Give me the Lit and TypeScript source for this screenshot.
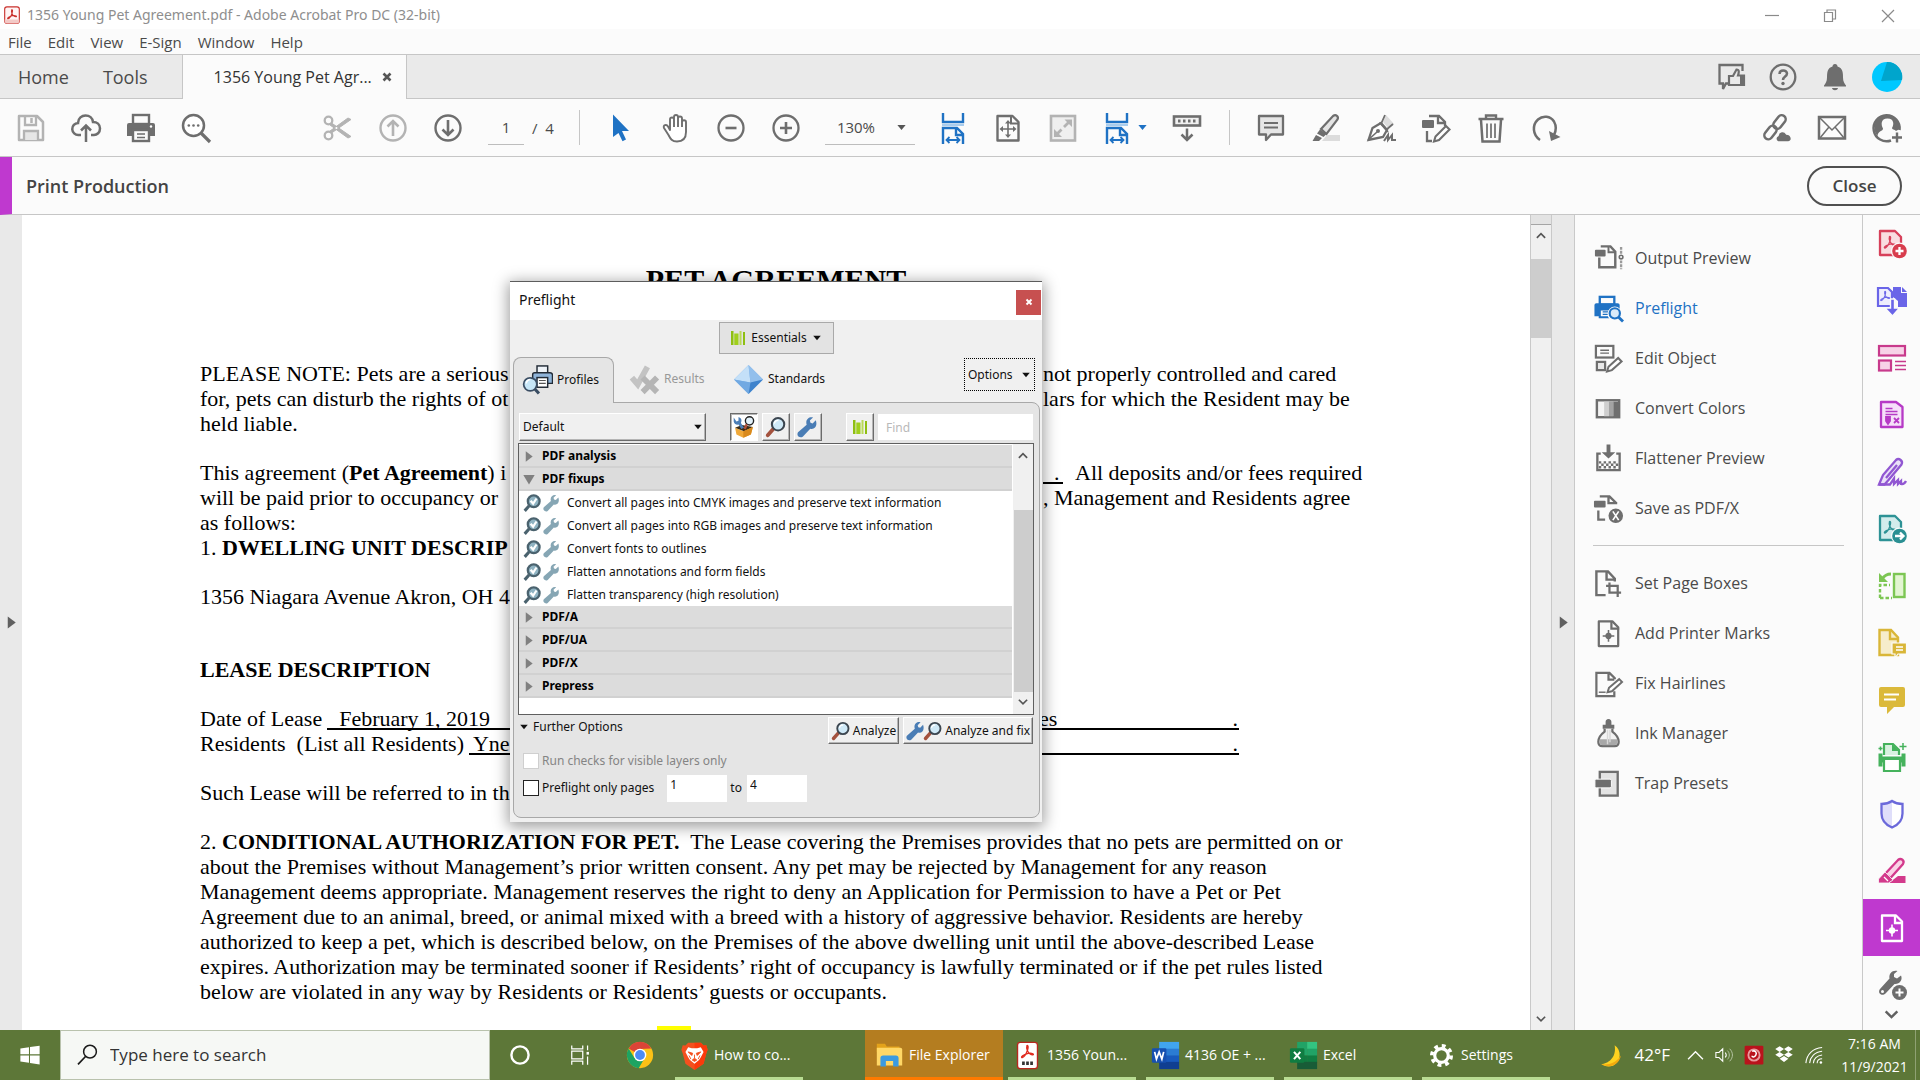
import { LitElement, html, svg, css, nothing } from "lit";
import { customElement, property, state } from "lit/decorators.js";
import { classMap } from "lit/directives/class-map.js";

const G = "#6e6e6e";
const L = "#b3b3b3";
const B = "#1f72c4";

const pdfMark = (c: string, x = 0, y = 0) =>
  svg`<path transform="translate(${x} ${y})" d="M6 0.5c1.6-.6 1.2 2.5.4 4.6C5.4 8 3.2 11.600 1.600 12c-1.500.2-.6-1.700 1.700-2.700 2.600-1.200 6.500-1.900 8.400-.9 1.500 1.200-1 1.500-2.700.2C7 7.200 5 3.500 6 .5z" fill="none" stroke=${c} stroke-width="1.300"/>`;

const wrenchBody = (c: string) =>
  svg`<path transform="translate(-2 -1) scale(1.150)" d="M25.500 6.200 21.500 10.200 18.800 9.400 18 6.700 22 2.700C18 1.400 13.500 4.200 13.500 9c0 1.200.2 2 .5 2.800L3 21.500c-2.500 4 2 8 6 5.500L18.500 17c5 1.600 9.700-3 7-10.800z" fill=${c}/>`;

const lens = (ring: string, handle: string, glass: string) => svg`
  <path d="M12 19 4 28" stroke=${handle} stroke-width="5.500" stroke-linecap="round"/>
  <circle cx="19" cy="12" r="9" fill=${glass} stroke=${ring} stroke-width="3"/>
  <path d="M13.500 11a5.500 5.500 0 0 1 6-4.500" stroke="#fff" stroke-width="2" fill="none"/>`;

const books = svg`
  <rect x="2" y="2" width="5" height="28" fill="#8fbf12"/><rect x="8.500" y="7" width="8.500" height="23" fill="#a0cf1c"/>
  <rect x="19" y="2" width="4" height="28" fill="#b9d957"/><rect x="26" y="4" width="4" height="26" fill="#8fbf12"/>`;

const printMarks = (c: string) => svg`
  <path d="M6 3.500h14l6 6V29H6z" fill="none" stroke=${c} stroke-width="2.300" stroke-linejoin="round"/>
  <path d="M19 3v8h8" fill="none" stroke=${c} stroke-width="2.300"/>
  <circle cx="16" cy="18.500" r="3.200" fill=${c}/><path d="M16 12.500v12M10 18.500h12" stroke=${c} stroke-width="1.600"/>`;

const fitWidth = svg`
  <path d="M6 1v9h20V1" fill="none" stroke=${B} stroke-width="2.400"/><path d="M5 13h22" stroke="#a9cdee" stroke-width="2"/>
  <path d="M6 32V16h14l6 6v10M19 16v7h7" fill="none" stroke=${B} stroke-width="2.400"/>
  <path d="M9.500 28h13M12.500 25l-3 3 3 3M19.500 25l3 3-3 3" fill="none" stroke=${B} stroke-width="1.800"/>`;

const ICONS: Record<string, unknown> = {
  acrobat: svg`<rect x="3" y="1.500" width="26" height="29" rx="4" fill="#fff4f4" stroke="#c9302c" stroke-width="2"/>
    <path d="M3 24h26v3a3.500 3.500 0 0 1-3.500 3.500h-19A3.500 3.500 0 0 1 3 27z" fill="#f3c9c6"/><g transform="translate(7 6) scale(1.400)">${pdfMark("#c9302c")}</g>`,
  minimize: svg`<path d="M9 15.500h14" stroke="#8a8a8a" stroke-width="1.200"/>`,
  restore: svg`<path d="M10.500 12.500h8v9h-8zM13 12.500v-2.500h8.500v9h-3" fill="none" stroke="#8a8a8a" stroke-width="1.200"/>`,
  closeWin: svg`<path d="M10 10l12 12M22 10 10 22" stroke="#8a8a8a" stroke-width="1.200"/>`,
  x: svg`<path d="M8 8l16 16M24 8 8 24" stroke="currentColor" stroke-width="6"/>`,
  feedback: svg`<path d="M14 22.500h-3l-3 5.500v-5.500H4.500V4h23v6" fill="none" stroke=${G} stroke-width="2.300"/>
    <path d="M14 15h4l3.500-6.500c3 0 2.500 3 1.500 6h6v9.500H14z" fill="#eaeaea" stroke=${G} stroke-width="2.200"/><rect x="25" y="14" width="5" height="11" fill=${G}/>`,
  help: svg`<circle cx="16" cy="16" r="12.300" fill="none" stroke=${G} stroke-width="2.300"/>
    <path d="M12.500 13c0-5 7.500-4.500 7.500-.5 0 3-4 3-4 6.500" fill="none" stroke=${G} stroke-width="2.500"/><circle cx="16" cy="22.500" r="1.700" fill=${G}/>`,
  bell: svg`<path d="M16 3c2 0 2.500 1.500 2.500 2.500 5 1.500 5.500 5.500 5.500 11 0 4 1.500 6 3 8v1H5v-1c1.500-2 3-4 3-8 0-5.500.5-9.500 5.500-11C13.500 4.500 14 3 16 3zM13 27h6c-.5 3-5.500 3-6 0z" fill=${G}/>`,
  avatar: svg`<circle cx="16" cy="16" r="15" fill="#00c8ff"/><path d="M16 1A15 15 0 0 1 31 19L10 20 16 1z" fill="#00a5cc"/>`,
  save: svg`<path d="M4 4h18l6 6v18H4z" fill="none" stroke=${L} stroke-width="2.500" stroke-linejoin="round"/><path d="M10 4v9h11V4" fill="none" stroke=${L} stroke-width="2.300"/>
    <path d="M16.500 6v5" stroke=${L} stroke-width="2.500"/><path d="M9 28v-9h14v9" fill="#e6e6e6" stroke=${L} stroke-width="2.300"/>`,
  cloudUp: svg`<path d="M11 23H8.500a6 6 0 0 1-.5-12C8 6 12 3.500 15.500 3.500c4 0 7 2.500 7.500 6.500 4 0 7 2.500 7 6.500s-3 6.500-6 6.500H21" fill="none" stroke=${G} stroke-width="2.500"/>
    <path d="M16 30V14M11 18.500l5-5 5 5" fill="none" stroke=${G} stroke-width="2.500"/>`,
  print: svg`<rect x="8" y="3" width="16" height="9" fill="none" stroke=${G} stroke-width="2.400"/><path d="M4 11h24a2 2 0 0 1 2 2v11h-6v-5H8v5H2V13a2 2 0 0 1 2-2z" fill=${G}/>
    <rect x="8" y="18" width="16" height="11" fill="#fbfbfb" stroke=${G} stroke-width="2.400"/><path d="M12 22h8M12 25.500h8" stroke=${G} stroke-width="1.500"/><circle cx="26" cy="14.500" r="1.200" fill="#fff"/>`,
  zoomOut: svg`<circle cx="13.500" cy="13.500" r="10.500" fill="#fff" stroke=${G} stroke-width="2.500"/><path d="M21 21l9 9" stroke=${G} stroke-width="3.200"/>
    <circle cx="8.800" cy="13.500" r="1.300" fill=${G}/><circle cx="13.500" cy="13.500" r="1.300" fill=${G}/><circle cx="18.200" cy="13.500" r="1.300" fill=${G}/>`,
  scissors: svg`<circle cx="6.500" cy="8.500" r="3.800" fill="none" stroke=${L} stroke-width="2.300"/><circle cx="6.500" cy="23.500" r="3.800" fill="none" stroke=${L} stroke-width="2.300"/>
    <path d="M9.500 11 29 24.500l-3 1.500L8 13zM9.500 21 29 7.500 26 6 8 19z" fill=${L} stroke=${L} stroke-width="1"/>`,
  up: svg`<circle cx="16" cy="16" r="12.500" fill="none" stroke=${L} stroke-width="2.400"/><path d="M16 24V9M10.500 14.500 16 9l5.500 5.500" fill="none" stroke=${L} stroke-width="2.600"/>`,
  down: svg`<circle cx="16" cy="16" r="12.500" fill="none" stroke=${G} stroke-width="2.400"/><path d="M16 8v15M10.500 17.500 16 23l5.500-5.500" fill="none" stroke=${G} stroke-width="2.600"/>`,
  pointer: svg`<path d="M8 2.500 24 19h-7l4 8.500-3.500 1.800L13.500 21 8 25z" fill=${B}/>`,
  hand: svg`<path d="M9 18V7.500c0-2.700 4-2.700 4 0V5c0-2.700 4-2.700 4 0v1.500c0-2.700 4-2.700 4 0V10c0-2.400 4-2.400 4 0v10c0 6-3 9.500-9 9.500-5 0-6.500-2.500-8.500-6.500L3 16c-1.300-2.800 2.500-4.200 4-1.500L9 18zM13 7v8M17 6v9M21 8v7" transform="translate(1 0)" fill="#fff" stroke=${G} stroke-width="1.900" stroke-linejoin="round"/>`,
  minus: svg`<circle cx="16" cy="16" r="12.500" fill="none" stroke=${G} stroke-width="2.300"/><path d="M10.500 16h11" stroke=${G} stroke-width="2.600"/>`,
  plus: svg`<circle cx="16" cy="16" r="12.500" fill="none" stroke=${G} stroke-width="2.300"/><path d="M10 16h12M16 10v12" stroke=${G} stroke-width="2.600"/>`,
  caret: svg`<path d="M4 9h24L16 23z" fill="currentColor"/>`,
  fitWidth,
  fitPage: svg`<path d="M5.500 4h15l6 6v18.500h-21z" fill="none" stroke=${G} stroke-width="2.400" stroke-linejoin="round"/><path d="M19 4v7.500h7.500" fill="none" stroke=${G} stroke-width="2"/>
    <path d="M16 10v14M9 17h14" stroke=${G} stroke-width="1.600"/><path d="M16 8l3 3.500h-6zM16 26l3-3.500h-6zM7.500 17l3.500-3v6zM24.500 17 21 14v6z" fill=${G}/>`,
  fullscreen: svg`<rect x="4" y="4" width="24" height="24.500" fill="#efefef" stroke=${L} stroke-width="2.600"/><path d="M17.500 7.500H25V15zM7 17v8h8z" fill=${L}/><path d="M17 15l5-5M9.500 22.500l5-5" stroke=${L} stroke-width="2.800"/>`,
  keyboard: svg`<rect x="3" y="4.500" width="26" height="9" fill="#f0f0f0" stroke=${G} stroke-width="2.600"/><path d="M7 9h18" stroke=${G} stroke-width="3" stroke-dasharray="2.500 2.500"/>
    <path d="M16 16.500v11M10.500 22.500 16 28l5.500-5.500" fill="none" stroke=${G} stroke-width="2.500"/>`,
  comment: svg`<path d="M4 4h24v18.500H16L11 28v-5.500H4z" fill="#e6e6e6" stroke=${G} stroke-width="2.300" stroke-linejoin="round"/><path d="M9 11h14M9 15.500h14" stroke=${G} stroke-width="1.800"/>`,
  marker: svg`<path d="M12 29h18v-6H17z" fill="#dcdcdc"/><path d="M11 17 23 4c3-2 6 .5 4.500 3.500L16.500 22z" fill="#e4e4e4" stroke=${G} stroke-width="2.200"/><path d="M10 17.500l6.500 4.500-3 3-6.500-3.500zM2.500 29l3.500-6 6 3-3 3z" fill=${G}/>`,
  sign: svg`<path d="M3.500 28 7.500 16l8.500-5 6 7-4 7z" fill="#fff" stroke=${G} stroke-width="2.300"/><path d="M3 28l9-8" stroke=${G} stroke-width="1.600"/><circle cx="13" cy="19" r="2" fill=${G}/>
    <path d="M18 10l3-7 8 9-6 4z" fill="#dcdcdc"/><path d="M14.500 10.500 23 20M20 3l-4 9M28 12l-7 6" stroke=${G} stroke-width="1.800"/><path d="M19 29l4-6v5l4-5v5h4" fill="none" stroke=${G} stroke-width="2"/>`,
  editDoc: svg`<path d="M9 4h10l6 6v4M18 4v7h7M7 19v10h5" fill="none" stroke=${G} stroke-width="2.300"/><rect x="2" y="8" width="12" height="8" rx="1" fill=${G}/>
    <path d="M14 29.500l1.500-5L26 14l3.500 3.500L19 28z" fill="#fff" stroke=${G} stroke-width="2.100"/>`,
  trash: svg`<path d="M3.500 7h25M11 7V3.500h10V7" fill="none" stroke=${G} stroke-width="2.400"/><path d="M6 8l1.500 21.500h17L26 8" fill="none" stroke=${G} stroke-width="2.500"/><path d="M12 11.500v14.500M16 11.500v14.500M20 11.500v14.500" stroke=${G} stroke-width="1.700"/>`,
  rotate: svg`<path d="M10 28C2.500 23 2 13 8 7.500c5-4.500 12.500-3.500 16 2C26.500 14 26 19 24 23" fill="none" stroke=${G} stroke-width="2.500"/><path d="M19 19l2 10 9.500-4z" fill=${G}/>`,
  link: svg`<g fill="none" stroke=${G} stroke-width="2.500"><rect x="-4" y="-7.500" width="8" height="15" rx="4" transform="translate(18.500 10) rotate(38)"/><rect x="-4" y="-7.500" width="8" height="15" rx="4" transform="translate(9.500 20.500) rotate(38)"/></g>
    <path d="M17 30a3.500 3.500 0 0 1 0-6.500c.5-4.500 6.500-5.500 8.500-1.500 5 0 7 7 2 8z" fill=${G} stroke="#fbfbfb" stroke-width="1.500"/>`,
  mail: svg`<rect x="3" y="5" width="26" height="21.500" fill="none" stroke=${G} stroke-width="2.500"/><path d="M4 6l12 12L28 6M4 26l9-11M28 26l-9-11" fill="none" stroke=${G} stroke-width="1.500"/>`,
  addUser: svg`<path d="M20 28.500A13 13 0 1 1 28.500 18" fill="none" stroke=${G} stroke-width="2.500"/><path d="M3.500 16C3.500 8 8 3.500 16 3.500S28.500 9 28.500 17l-3.500 2c-1.500-1.500-4-1.500-4-3 2-3 2.500-9.500-4.500-9.500S10 13 12 16.500c0 3-5 2-5.500 7.500-2-2-3-5-3-8z" fill=${G}/>
    <path d="M21 25.500h10M26 20.500v10" stroke="#fbfbfb" stroke-width="5"/><path d="M21 25.500h10M26 20.500v10" stroke=${G} stroke-width="2.400"/>`,
  outputPreview: svg`<path d="M8 3.500h10l5 5.500v16H6.500V15" fill="none" stroke=${G} stroke-width="2.500"/><path d="M16 3.500v6h7" fill="none" stroke=${G} stroke-width="2"/><rect x="2" y="7" width="11" height="7" rx="1" fill=${G}/>
    <path d="M29 4v7M29 18v9" stroke="#9a9a9a" stroke-width="2.400" stroke-dasharray="3 1"/><circle cx="29" cy="14.500" r="1.900" fill="none" stroke=${G} stroke-width="1.600"/>`,
  preflight: svg`<rect x="7" y="4" width="15" height="8" fill="none" stroke=${B} stroke-width="2.400"/><path d="M3.500 10.500h22a2 2 0 0 1 2 2V20H19v-1H7v5H1.500V12.500a2 2 0 0 1 2-2z" fill=${B}/>
    <path d="M7 17h12v8H7z" fill="#fbfbfb" stroke=${B} stroke-width="2.200"/><path d="M10 19.500h6M10 22h6" stroke=${B} stroke-width="1.400"/>
    <circle cx="22.500" cy="21.500" r="7.500" fill="#fbfbfb"/><circle cx="22.500" cy="21" r="5.300" fill="#d9ebfa" stroke=${B} stroke-width="2.200"/><path d="M26.500 25l4.500 4.500" stroke=${B} stroke-width="3"/>`,
  editObject: svg`<rect x="3" y="3" width="18" height="12" fill="none" stroke=${G} stroke-width="2.300"/><path d="M7.500 7.500h9M7.500 10.500h9" stroke=${G} stroke-width="1.400"/><rect x="4" y="19.500" width="8.500" height="8.500" fill="#e8e8e8" stroke=${G} stroke-width="2.300"/>
    <path d="M14.500 29.500l1.500-5 10-9 3.500 3.500-10 9z" fill="#fff" stroke=${G} stroke-width="2.100"/>`,
  convertColors: svg`<rect x="4" y="7.500" width="23" height="17.500" fill="#f4f4f4" stroke=${G} stroke-width="2.500"/><rect x="11.500" y="9" width="5" height="15" fill="#cfcfcf"/><rect x="16.500" y="9" width="4.500" height="15" fill="#a3a3a3"/><rect x="21" y="9" width="6" height="15" fill=${G}/>`,
  flattener: svg`<path d="M14 1.500h4v8h5L16 16 9 9.500h5z" fill=${G}/><path d="M8 11H4.500v17h23V11H24" fill="none" stroke=${G} stroke-width="2.400"/><path d="M6 20h20M8.500 22.500h18M6 25h20" stroke=${G} stroke-width="2.500" stroke-dasharray="2.500 2.500"/>`,
  saveX: svg`<path d="M7 3.500h10l7 7M16 3.500v7h9M5.500 18v9.500h7" fill="none" stroke=${G} stroke-width="2.400"/><rect x="1" y="8" width="12" height="7" rx="1" fill=${G}/><circle cx="23.500" cy="23.500" r="7.500" fill=${G}/><path d="M20.500 19l6 9M26.500 19l-6 9" stroke="#fff" stroke-width="1.700"/>`,
  pageBoxes: svg`<path d="M13 28H3.500V3.500h12l7 7.500v3M14 4v8h8" fill="none" stroke=${G} stroke-width="2.500"/><path d="M17 15v10.500h12M13.500 18.500h12V30" fill="none" stroke=${G} stroke-width="2.300"/>`,
  printerMarks: printMarks(G),
  hairlines: svg`<path d="M22 24v5H3.500V5H17l5.500 5.500v1M16 5v7h6" fill="none" stroke=${G} stroke-width="2.300"/><path d="M6 25h7" stroke=${G} stroke-width="1.500"/><path d="M15 25l1.500-4.500L27 11.500l3 3L19.500 24z" fill="#fff" stroke=${G} stroke-width="2"/>`,
  ink: svg`<path d="M16 1c2 0 3 1.500 3 3v3h3v4H10V7h3V4c0-1.500 1-3 3-3z" fill=${G}/><path d="M12 11v3c-4 3-6.500 6.500-6.500 10.500 0 3 1.500 4.500 4 4.500h13c2.500 0 4-1.500 4-4.500C26.500 20.500 24 17 20 14v-3" fill="#f3f3f3" stroke=${G} stroke-width="2.300"/>
    <path d="M7 22h18c1 4-.5 6-3 6H10c-2.500 0-4-2-3-6z" fill="#a8a8a8"/><path d="M15 12v15M17.500 12v13" stroke="#d8d8d8" stroke-width="1.500"/>`,
  trap: svg`<rect x="7" y="4" width="18.500" height="24.500" fill="#e3e3e3" stroke=${G} stroke-width="2.400"/><rect x="2" y="11.500" width="17" height="9" rx="1.500" fill=${G} stroke="#fbfbfb" stroke-width="1"/>`,
  railCreate: svg`<path d="M4 3h15l6 6v18H4z" fill="#f9dde0" stroke="#d7405a" stroke-width="2.300" stroke-linejoin="round"/>${pdfMark("#d7405a", 7.5, 8)}<circle cx="23.500" cy="23" r="8.500" fill="#fbfbfb"/><circle cx="23.500" cy="23" r="7.300" fill="#d83d4d"/><path d="M19.500 23h8M23.500 19v8" stroke="#fff" stroke-width="2.300"/>`,
  railCombine: svg`<path d="M17 2h8v6h6v14h-9v-6l-5-4z" fill="#6a65e8"/><path d="M26 2l5 5h-5z" fill="#6a65e8"/><path d="M2 3h10l4 4v14H2z" fill="#eeedfd" stroke="#6a65e8" stroke-width="2.200"/><g transform="translate(4 6) scale(.8)">${pdfMark("#6a65e8")}</g>
    <path d="M14.500 14h4v9h5L16.500 31 9 23h5.500z" fill="#6a65e8" stroke="#fbfbfb" stroke-width="1.400"/>`,
  railOrganize: svg`<rect x="3" y="4" width="26" height="9.500" fill="#f7d3e7" stroke="#c83a8c" stroke-width="2.200"/><rect x="3" y="18.500" width="12" height="10" fill="#f7d3e7" stroke="#c83a8c" stroke-width="2.200"/><path d="M19 19.500h11M19 23.500h11M19 27.500h11" stroke="#c83a8c" stroke-width="1.600"/>`,
  railForm: svg`<path d="M5 3h15l6.500 5v20H5z" fill="#f6e0fa" stroke="#b63ac6" stroke-width="2.300" stroke-linejoin="round"/><path d="M9.500 9.500h7M9.500 12.500h12M9.500 15.500h12" stroke="#b63ac6" stroke-width="1.500"/><path d="M10 18h4v4l-2 3-2-3zM18 19l5 5M23 19l-5 5" fill="#b63ac6" stroke="#b63ac6" stroke-width="1.800"/>`,
  railSign: svg`<path d="M3 28.500 7 19 20 4c3-2.500 7.500 1 5.500 4.500L12.500 24l-4 4.500z" fill="#eae0f8" stroke="#9157d2" stroke-width="2.300"/><path d="M21 9 10 22M3 28.500h11l4-6v5.500l4-4v4l3-3v3c2 .5 4-1 5-3" fill="none" stroke="#9157d2" stroke-width="2.300"/>`,
  railExport: svg`<path d="M4 3h15l6 6v18H4z" fill="#d3ecec" stroke="#2d9295" stroke-width="2.300" stroke-linejoin="round"/>${pdfMark("#2d9295", 7.5, 8)}<circle cx="23.500" cy="23" r="8.500" fill="#fbfbfb"/><circle cx="23.500" cy="23" r="7.300" fill="#2a8f92"/><path d="M19 23h8M24 19.500l3.500 3.500-3.500 3.500" fill="none" stroke="#fff" stroke-width="2.300"/>`,
  railCompress: svg`<rect x="18" y="4" width="10.500" height="23" fill="#e3f5d2" stroke="#7cc653" stroke-width="2.400"/><path d="M4 28V15h10M4 28h12" fill="none" stroke="#7cc653" stroke-width="2.400" stroke-dasharray="3.500 2"/><path d="M3 3v9h9z" fill="#7cc653"/><path d="M6 9c2-3 5-5 9-5" fill="none" stroke="#7cc653" stroke-width="2.800"/>`,
  railReview: svg`<path d="M3.500 3H15l7 7.500V28H3.500z" fill="#f6edcb" stroke="#d9b638" stroke-width="2.400"/><path d="M14 3v9h8" fill="none" stroke="#d9b638" stroke-width="2.400"/><path d="M16 16h14.500v11H22l-3 4v-4h-3z" fill="#d9b638" stroke="#fbfbfb" stroke-width="1.200"/><path d="M20 20h7M20 23h7" stroke="#fff" stroke-width="1.400"/>`,
  railComment: svg`<path d="M5 3h22a2 2 0 0 1 2 2v16a2 2 0 0 1-2 2H18l-7 7v-7H5a2 2 0 0 1-2-2V5a2 2 0 0 1 2-2z" fill="#dbb93a"/><path d="M8 10.500h15M8 15.500h12" stroke="#fff" stroke-width="2"/>`,
  railScan: svg`<path d="M8 14V3h9l6 6v5" fill="#d8f1df" stroke="#45b25c" stroke-width="2.200"/><path d="M16 3l7 7h-7z" fill="#45b25c"/><path d="M2.500 12.500h4v3h19v-3h4v13h-4v-4h-19v4h-4z" fill="#45b25c"/><path d="M8 19v11h16V19" fill="#fff" stroke="#45b25c" stroke-width="2.200"/>
    <path d="M27 2v7M23.500 5.500h7M4.500 5.500v4M2.500 7.500h4" stroke="#45b25c" stroke-width="1.500"/>`,
  railShield: svg`<path d="M16 3c3 2 7 3 10.500 3v9.500C26.500 22 22 27 16 29.500 10 27 5.500 22 5.500 15.500V6C9 6 13 5 16 3z" fill="#fff"/><path d="M16 3v26.500C10 27 5.500 22 5.500 15.500V6C9 6 13 5 16 3z" fill="#dfdefa"/>
    <path d="M16 3c3 2 7 3 10.500 3v9.500C26.500 22 22 27 16 29.500 10 27 5.500 22 5.500 15.500V6C9 6 13 5 16 3z" fill="none" stroke="#6b69da" stroke-width="2.300"/>`,
  railRedact: svg`<path d="M13 28l9-7h7.500v7z" fill="#d33a8c"/><path d="M9 19 22 5c3-2.500 7 .5 5 4L14.500 23z" fill="#fad3e7" stroke="#d33a8c" stroke-width="2.300"/><path d="M9 17l8 8-4.500 3H2.500V24z" fill="#d33a8c" stroke="#fbfbfb" stroke-width=".8"/><path d="M8 22l4 4" stroke="#fff" stroke-width="1.300"/>`,
  railPrint: printMarks("#ffffff"),
  railMore: svg`<path d="M25 6.500 21 9.500 18 8 18 5 21.500 2C17 .5 12.500 4 13.500 9.500L4 20c-3 4 2 8 5.500 4.500L18.500 15c5 .5 8.500-4 6.500-8.500z" fill=${G}/><circle cx="6.500" cy="22.500" r="1.500" fill="#fbfbfb"/><circle cx="23.500" cy="23.500" r="8.500" fill="#fbfbfb"/><circle cx="23.500" cy="23.500" r="7.500" fill=${G}/><path d="M19.500 23.500h8M23.500 19.500v8" stroke="#fff" stroke-width="2"/>`,
  chevDown: svg`<path d="M5 10l11 11L27 10" fill="none" stroke="currentColor" stroke-width="4.500"/>`,
  chevUp: svg`<path d="M5 21 16 10l11 11" fill="none" stroke="currentColor" stroke-width="4.500"/>`,
  chevUpThin: svg`<path d="M2 23 16 9l14 14" fill="none" stroke="#fff" stroke-width="2.500"/>`,
  triRight: svg`<path d="M8 3v26L25 16z" fill="currentColor"/>`,
  triDown: svg`<path d="M2 5h28L16 28z" fill="currentColor"/>`,
  books,
  profiles: svg`<rect x="15.500" y="2" width="11" height="9" fill="#eef3f8" stroke="#222b36" stroke-width="1.500"/><path d="M13 9h16c1.500 0 2.500 1 2.500 2.500V20H11v-9c0-1.200 1-2 2-2z" fill="#8fb4d9" stroke="#222b36" stroke-width="1.500"/>
    <rect x="15.500" y="14" width="11" height="10" fill="#fff" stroke="#222b36" stroke-width="1.500"/><path d="M17.500 17h7M17.500 20h7" stroke="#555" stroke-width="1.200"/><circle cx="8.500" cy="21" r="6.800" fill="#c7e6f7" stroke="#3a4d63" stroke-width="1.800"/><path d="M4.500 20a4 4 0 0 1 4-4" stroke="#fff" stroke-width="1.600" fill="none"/><path d="M13.500 26l4 4.500" stroke="#3a4d63" stroke-width="3.200"/>`,
  results: svg`<path d="M3 14l6 7L19 3" fill="none" stroke="#c3c3c3" stroke-width="6"/><path d="M14 14l15 15M29 14 14 29" stroke="#b5b5b5" stroke-width="6"/>`,
  standards: svg`<path d="M16 1 31 16 16 31 1 16z" fill="#7fb2e6"/><path d="M16 1 18 19 1 16z" fill="#c4e0f8"/><path d="M16 1 31 16 18 19z" fill="#92bfec"/><path d="M1 16l17 3-2 12z" fill="#71a9e2"/><path d="M31 16l-13 3-2 12z" fill="#3f83cc"/>`,
  toolbox: svg`<path d="M3 17l12 5 14-6-3 11-11 4.500L5 27z" fill="#f0a93a"/><path d="M3 17 13 13l16 3-13 6z" fill="#3b2b14"/><path d="M15 22v9.500L26 27l3-11z" fill="#d98a1e"/><path d="M1 2v6c1 4 4 5 7 4.500L12 19l4-2-4.500-7c2-4 .5-7-3.500-8.500V7L5 8z" fill="#4c7fb8"/><circle cx="24" cy="7" r="6" fill="#e3f2fb" stroke="#222" stroke-width="2"/><path d="M20 12l-3 7" stroke="#b0503a" stroke-width="3.500"/>`,
  magnifier: lens("#3c4650", "#a4523e", "#cfe9f7"),
  wrench: wrenchBody("#4a7db5"),
  wrenchSoft: wrenchBody("#86a6b4"),
  check: svg`<path d="M11 21 3 30" stroke="#4a626e" stroke-width="5.500"/><circle cx="19" cy="13" r="10.500" fill="#8fb3c2" stroke="#4a626e" stroke-width="4"/><path d="M13.500 12l4.500 5 6-9" fill="none" stroke="#fff" stroke-width="4"/>`,
  windows: svg`<path d="M2 6.500 14.500 4.700V15H2zM16 4.500 30 2.500V15H16zM2 16.700h12.500V27.300L2 25.500zM16 16.700h14v13L16 27.600z" fill="#fff"/>`,
  search: svg`<circle cx="20" cy="11.500" r="8.500" fill="none" stroke="#1a1a1a" stroke-width="2"/><path d="M14 18 4 28.500" stroke="#1a1a1a" stroke-width="2.200"/>`,
  cortana: svg`<circle cx="16" cy="16" r="12.500" fill="none" stroke="#fff" stroke-width="3.500"/>`,
  taskView: svg`<path d="M4 2v5h16V2M4 30v-5h16v5M4 10.500h16v11H4zM27 2v7M27 18v12" fill="none" stroke="#fff" stroke-width="1.800"/><rect x="25.500" y="11.500" width="3.500" height="4" fill="#fff"/>`,
  chrome: svg`<circle cx="16" cy="16" r="15" fill="#fbc116"/><path d="M16 16 3 8.500A15 15 0 0 1 29 8.500L16 9z" fill="#db4437"/><path d="M3 8.500A15 15 0 0 0 14.500 31L21.500 19 9.700 19.500z" fill="#1da462"/><circle cx="16" cy="16" r="7.200" fill="#fff"/><circle cx="16" cy="16" r="5.600" fill="#4c8bf5"/>`,
  brave: svg`<path d="M9 2h14l3 3 3-.3 1.500 5-1.500 4-3 11.300L16 32 6 25 3 13.700l-1.500-4L3 4.700 6 5z" fill="#f4501e"/><path d="M16 2h7l3 3 3-.3 1.500 5-1.500 4-3 11.300L16 32z" fill="#fb3a0c"/>
    <path d="M9 7l4 1h6l4-1 3 5-3 6-2 3-5 4-5-4-2-3-3-6z" fill="#fff"/><path d="M9 12l5 1.500-1 2.500zM23 12l-5 1.500 1 2.500zM16 15v4l-2.500 2 2.500 1.500 2.500-1.500L16 19M10 16l2 4M22 16l-2 4" fill="#f4501e" stroke="#f4501e" stroke-width="1"/>`,
  folder: svg`<path d="M2 3h9l2 3h14v6H2z" fill="#e3a21a"/><path d="M2 7.500h26a2 2 0 0 1 2 2V27H2z" fill="#ffd766"/><path d="M6 28V19a3 3 0 0 1 3-3h14a3 3 0 0 1 3 3v9h-6v-6h-8v6z" fill="#3b9ae0"/>`,
  pdfFile: svg`<rect x="5" y="1.500" width="22" height="29" rx="3" fill="#fff" stroke="#b8281e" stroke-width="1.500"/><g transform="translate(8.500 4.500) scale(1.150)">${pdfMark("#e02b20")}</g><path d="M10 24.500h12" stroke="#333" stroke-width="4" stroke-dasharray="3 1.500"/>`,
  word: svg`<rect x="9" y="1" width="22" height="8" fill="#41a5ee"/><rect x="9" y="8.500" width="22" height="8" fill="#2b7cd3"/><rect x="9" y="16" width="22" height="8" fill="#185abd"/><rect x="9" y="23" width="22" height="8" fill="#103f91"/><rect x="1" y="8" width="16" height="16" rx="1.500" fill="#1650b0"/><path d="M4 12l2 8 3-8 3 8 2-8" fill="none" stroke="#fff" stroke-width="1.900"/>`,
  excel: svg`<rect x="9" y="1" width="11" height="15" fill="#21a366"/><rect x="20" y="1" width="11" height="8" fill="#33c481"/><rect x="20" y="8.500" width="11" height="8" fill="#21a366"/><rect x="9" y="16" width="11" height="8" fill="#107c41"/><rect x="20" y="16" width="11" height="8" fill="#107c41"/><rect x="9" y="23" width="22" height="8" fill="#185c37"/><rect x="1" y="8" width="16" height="16" rx="1.500" fill="#107c41"/><path d="M5.500 12l7 8M12.500 12l-7 8" stroke="#fff" stroke-width="2.200"/>`,
  gear: svg`<circle cx="16" cy="16" r="7.500" fill="none" stroke="#fff" stroke-width="3.500"/><circle cx="16" cy="16" r="10.700" fill="none" stroke="#fff" stroke-width="4" stroke-dasharray="4.200 4.200"/>`,
  moon: svg`<path d="M20 3c9 6 9 21-2 26-6 2-11 1-15-2 8 0 20-8 17-24z" fill="#ffd21f"/><path d="M28 16c-1 7-7 13-14 13.700-4 .3-8-.7-11-2.700 8 2 20-2 25-11z" fill="#f2a90f"/>`,
  speaker: svg`<path d="M3 12h5l6-6v20l-6-6H3zM18 12c2 2.500 2 5.500 0 8" fill="none" stroke="#fff" stroke-width="1.700"/><path d="M21.500 9c4 4 4 10 0 14M25 6c6 6 6 14 0 20" fill="none" stroke="#b9c8a8" stroke-width="1.500"/>`,
  cloudSync: svg`<rect x="1" y="1" width="30" height="30" rx="2" fill="#b9131c"/><circle cx="16" cy="16" r="9" fill="none" stroke="#e89a9d" stroke-width="3"/><path d="M13 10c5-2 8 2 6 6s-6 4-6 1" fill="none" stroke="#fff" stroke-width="2.500"/>`,
  dropbox: svg`<path d="M9 2l7 4.500L9 11 2 6.500zM23 2l7 4.500-7 4.500-7-4.500zM9 11l7 4.500L9 20l-7-4.500zM23 11l7 4.500-7 4.500-7-4.500zM9 22l7-4.500 7 4.500-7 5z" fill="#fff"/>`,
  wifi: svg`<g fill="none" stroke="#fff" stroke-width="1.700"><path d="M3 29C4 15 14 5 29 4"/><path d="M9 29c1-10 8-18 20-19" /><path d="M15 29c0-7 6-12 14-13"/><path d="M21 29c0-4 3-7 8-7"/></g><circle cx="27" cy="28" r="2" fill="#fff"/>`,
};

@customElement("ui-icon")
class UiIcon extends LitElement {
  static styles = css`
    :host { display: inline-flex; flex: none; width: 32px; height: 32px; }
    svg { width: 100%; height: 100%; display: block; }
  `;
  @property() name = "";
  render() {
    return html`<svg viewBox="0 0 32 32" aria-hidden="true">${ICONS[this.name] ?? nothing}</svg>`;
  }
}

const FONT = css`"Open Sans", "Noto Sans", sans-serif`;
const UI_FONT = css`"Noto Sans", "Open Sans", sans-serif`;

@customElement("preflight-dialog")
class PreflightDialog extends LitElement {
  static styles = css`
    :host { display: block; font: 12px/16px ${UI_FONT}; color: #111; }
    * { box-sizing: border-box; }
    button, input, select { font: inherit; color: inherit; margin: 0; padding: 0; border: 0; border-radius: 0; background: none; }
    .window { width: 532px; background: #f0f0f0; border-top: 1px solid #5c5c5c; box-shadow: 0 3px 14px 2px rgba(0, 0, 0, 0.38); padding-bottom: 4px; }
    .title { display: flex; align-items: center; justify-content: space-between; height: 38px; background: #fff; padding: 2px 1px 0 9px; }
    .title h2 { margin: 0; font-size: 14px; font-weight: 400; padding-bottom: 4px; }
    .shut { width: 25px; height: 25px; background: #c75050; color: #fff; display: grid; place-items: center; }
    .shut ui-icon { width: 10px; height: 10px; }
    .library { display: flex; justify-content: center; padding: 2px 0 3px; }
    .essentials { display: flex; align-items: center; justify-content: center; gap: 5px; width: 115px; height: 32px; background: #e3e3e3; border: 1px solid #a9a9a9; }
    .essentials ui-icon { width: 16px; height: 16px; }
    .essentials .arrow, .arrow { width: 10px; height: 10px; }
    .tabs { display: flex; padding: 0 7px 0 3px; height: 46px; }
    .tab { display: flex; align-items: center; gap: 4px; height: 44px; }
    .tab ui-icon { width: 31px; height: 31px; }
    .active { position: relative; width: 101px; height: 46px; padding: 0 0 2px 8px; background: #e5e5e5; border: 1px solid #a8a8a8; border-bottom: 0; border-radius: 8px 8px 0 0; z-index: 1; }
    .muted { color: #999; padding-left: 15px; width: 106px; }
    .std { padding-left: 13px; }
    .options { display: flex; align-items: center; justify-content: space-between; margin: 1px 0 0 auto; width: 71px; height: 33px; padding: 0 3px 0 3px; border: 1px dotted #000; }
    .panel { margin: -1px 2px 0 3px; padding: 10px 5px 15px 4px; background: #e5e5e5; border: 1px solid #a8a8a8; border-radius: 0 8px 8px 8px; }
    .bar { display: flex; align-items: center; height: 28px; padding: 0 1px; }
    .pick { display: grid; width: 187px; height: 28px; margin-right: 24px; }
    .pick > * { grid-area: 1 / 1; }
    .pick ui-icon { justify-self: end; align-self: center; margin-right: 3px; pointer-events: none; }
    .bevel { background: #f0f0f0; border: 1px solid; border-color: #fff #6b6b6b #6b6b6b #fff; box-shadow: inset -1px -1px 0 #b5b5b5; }
    select.bevel { appearance: none; padding: 0 3px; }
    .tool { display: grid; place-items: center; width: 28px; height: 28px; margin-right: 4px; }
    .tool ui-icon { width: 22px; height: 22px; }
    .tool.down { background: #fff; border-color: #6b6b6b #fff #fff #6b6b6b; box-shadow: inset 1px 1px 0 #b5b5b5; }
    .tool.lib { margin-left: 20px; }
    .tool.lib ui-icon { width: 16px; height: 16px; }
    .find { flex: 1; min-width: 0; height: 26px; background: #fff; padding: 0 8px; }
    .find::placeholder { color: #b9b9b9; opacity: 1; }
    .list { display: flex; margin-top: 2px; height: 272px; background: #fff; border: 1px solid #5f5f5f; }
    .rows { flex: 1; display: flex; flex-direction: column; padding-top: 1px; }
    .row { display: flex; align-items: center; height: 23px; text-align: left; }
    .group { background: #dcdcdc; border-bottom: 2px solid #d1d1d1; font-weight: 700; padding: 1px 0 0 3px; gap: 6px; color: #000; }
    .group ui-icon { width: 14px; height: 13px; color: #808080; }
    .item { padding-left: 4px; gap: 2px; }
    .item ui-icon { width: 18px; height: 18px; }
    .item span { padding-left: 4px; }
    .scroll { display: flex; flex-direction: column; align-items: center; justify-content: space-between; width: 20px; margin-left: 1px; background: #f0f0f0; padding: 6px 0; color: #555; }
    .scroll ui-icon { width: 12px; height: 12px; }
    .thumb { width: 19px; height: 182px; margin-top: 44px; background: #cdcdcd; }
    .actions { display: flex; align-items: flex-start; gap: 4px; padding: 2px 1px 0; }
    .more { display: flex; align-items: center; gap: 4px; margin-right: auto; height: 20px; }
    .run { display: flex; align-items: center; justify-content: flex-end; gap: 2px; height: 27px; padding: 0 2px; }
    .run ui-icon { width: 20px; height: 20px; }
    .pair ui-icon + ui-icon { margin-left: -5px; }
    .line { display: flex; align-items: center; gap: 3px; padding-left: 5px; height: 28px; }
    .line.first { margin-top: 4px; color: #848484; height: 26px; }
    .box { appearance: none; width: 16px; height: 16px; background: #fff; border: 1px solid #222; }
    .box:disabled { border-color: #cfcfcf; }
    .num { width: 60px; height: 27px; background: #fff; padding: 0 3px 8px; }
    .num.from { margin-left: 10px; }
    .line .to { margin: 0 2px 0 0; }
  `;

  @state() private rows: [string, string[], boolean][] = [
    ["PDF analysis", [], false],
    ["PDF fixups", [
      "Convert all pages into CMYK images and preserve text information",
      "Convert all pages into RGB images and preserve text information",
      "Convert fonts to outlines",
      "Flatten annotations and form fields",
      "Flatten transparency (high resolution)",
    ], true],
    ["PDF/A", [], false],
    ["PDF/UA", [], false],
    ["PDF/X", [], false],
    ["Prepress", [], false],
  ];

  render() {
    return html`<section class="window" role="dialog" aria-labelledby="t">
      <div class="title"><h2 id="t">Preflight</h2><button class="shut" aria-label="Close"><ui-icon name="x"></ui-icon></button></div>
      <div class="library"><button class="essentials"><ui-icon name="books"></ui-icon>Essentials<ui-icon class="arrow" name="caret"></ui-icon></button></div>
      <div class="tabs">
        <button class="tab active"><ui-icon name="profiles"></ui-icon>Profiles</button>
        <button class="tab muted" disabled><ui-icon name="results"></ui-icon>Results</button>
        <button class="tab std"><ui-icon name="standards"></ui-icon>Standards</button>
        <button class="options">Options<ui-icon class="arrow" name="caret"></ui-icon></button>
      </div>
      <div class="panel">
        <div class="bar">
          <div class="pick"><select class="bevel" aria-label="Library"><option>Default</option></select><ui-icon class="arrow" name="caret"></ui-icon></div>
          <button class="tool bevel down" aria-label="Profiles"><ui-icon name="toolbox"></ui-icon></button>
          <button class="tool bevel" aria-label="Checks"><ui-icon name="magnifier"></ui-icon></button>
          <button class="tool bevel" aria-label="Fixups"><ui-icon name="wrench"></ui-icon></button>
          <button class="tool bevel lib" aria-label="Libraries"><ui-icon name="books"></ui-icon></button>
          <input class="find" type="text" placeholder="Find" aria-label="Find" />
        </div>
        <div class="list">
          <div class="rows">
            ${this.rows.map(([name, items, open]) => html`
              <button class="row group" aria-expanded=${open}><ui-icon name=${open ? "triDown" : "triRight"}></ui-icon>${name}</button>
              ${items.map((t) => html`<button class="row item"><ui-icon name="check"></ui-icon><ui-icon name="wrenchSoft"></ui-icon><span>${t}</span></button>`)}`)}
          </div>
          <div class="scroll"><ui-icon name="chevUp"></ui-icon><div class="thumb"></div><ui-icon name="chevDown"></ui-icon></div>
        </div>
        <div class="actions">
          <button class="more"><ui-icon class="arrow" name="caret"></ui-icon>Further Options</button>
          <button class="run bevel"><ui-icon name="magnifier"></ui-icon>Analyze</button>
          <button class="run bevel pair"><ui-icon name="wrench"></ui-icon><ui-icon name="magnifier"></ui-icon>Analyze and fix</button>
        </div>
        <div class="line first"><input id="layers" class="box" type="checkbox" disabled /><label for="layers">Run checks for visible layers only</label></div>
        <div class="line"><input id="only" class="box" type="checkbox" /><label for="only">Preflight only pages</label>
          <input class="num from" type="text" aria-label="First page" .value=${"1"} /><span class="to">to</span><input class="num" type="text" aria-label="Last page" .value=${"4"} /></div>
      </div>
    </section>`;
  }
}

@customElement("pdf-page")
class PdfPage extends LitElement {
  static styles = css`
    :host { display: block; font: 22px/25px "Liberation Serif", serif; color: #000; }
    * { box-sizing: border-box; }
    .page { padding: 48px 0 0 178px; white-space: pre; }
    h1 { margin: 0 0 64px; width: 1152px; text-align: center; font-size: 30px; line-height: 34px; }
    h2 { margin: 0 0 24px; font-size: 22px; line-height: 25px; }
    .para { margin-bottom: 24px; }
    .wide { margin-bottom: 48px; }
    .split { display: flex; height: 25px; }
    .lead { flex: 0 0 843px; }
    .blank { width: 20px; padding-left: 11px; margin-right: 12px; border-bottom: 2px solid #000; height: 24px; }
    .field { display: flex; width: 1039px; height: 25px; }
    .entry { display: flex; flex: 1; height: 24px; margin-left: 5px; padding: 0 1px 0 12px; border-bottom: 2px solid #000; }
    .entry.tight { padding-left: 4px; }
    .dot { margin-left: auto; }
    .tail { flex: 0 0 199px; display: flex; margin-left: auto; }
    .mark { width: 34px; height: 6px; margin: 22px 0 0 457px; background: #ff0; }
  `;

  private clause = [
    "about the Premises without Management’s prior written consent. Any pet may be rejected by Management for any reason",
    "Management deems appropriate. Management reserves the right to deny an Application for Permission to have a Pet or Pet",
    "Agreement due to an animal, breed, or animal mixed with a breed with a history of aggressive behavior. Residents are hereby",
    "authorized to keep a pet, which is described below, on the Premises of the above dwelling unit until the above-described Lease",
    "expires. Authorization may be terminated sooner if Residents’ right of occupancy is lawfully terminated or if the pet rules listed",
    "below are violated in any way by Residents or Residents’ guests or occupants.",
  ];

  render() {
    return html`<article class="page"><h1>PET AGREEMENT</h1><div class="para"><div class="split"><span class="lead">PLEASE NOTE: Pets are a serious</span><span>not properly controlled and cared</span></div><div class="split"><span class="lead">for, pets can disturb the rights of ot</span><span>lars for which the Resident may be</span></div><div>held liable.</div></div><div><div class="split"><span class="lead">This agreement (<b>Pet Agreement</b>) i</span><span class="blank">.</span><span>All deposits and/or fees required</span></div><div class="split"><span class="lead">will be paid prior to occupancy or</span><span>, Management and Residents agree</span></div><div>as follows:</div></div><div class="para">1. <b>DWELLING UNIT DESCRIP</b></div><div class="wide">1356 Niagara Avenue Akron, OH 4</div><h2>LEASE DESCRIPTION</h2><div class="para"><div class="field">Date of Lease<span class="entry">February 1, 2019<span class="tail">es<span class="dot">.</span></span></span></div><div class="field">Residents  (List all Residents)<span class="entry tight">Yne<span class="dot">.</span></span></div></div><div class="para">Such Lease will be referred to in th</div><div>2. <b>CONDITIONAL AUTHORIZATION FOR PET.</b>  The Lease covering the Premises provides that no pets are permitted on or</div>${this.clause.map((line) => html`<div>${line}</div>`)}<div class="mark"></div></article>`;
  }
}

@customElement("task-bar")
class TaskBar extends LitElement {
  static styles = css`
    :host { display: block; font: 15px/20px ${FONT}; color: #fff; }
    * { box-sizing: border-box; }
    button, input { font: inherit; color: inherit; margin: 0; padding: 0; border: 0; background: none; }
    .bar { display: flex; height: 50px; background: #5d7738; }
    .start { width: 60px; display: grid; place-items: center; }
    .start ui-icon { width: 22px; height: 22px; }
    .search { display: flex; align-items: center; gap: 11px; width: 430px; background: #f6f8f5; border: 1px solid #b9c2ad; padding: 0 14px; color: #333; }
    .search ui-icon { width: 24px; height: 24px; }
    .search input { flex: 1; min-width: 0; font-size: 17px; outline: 0; }
    .search input::placeholder { color: #333; opacity: 1; }
    .quick { width: 60px; display: grid; place-items: center; }
    .quick ui-icon { width: 22px; height: 22px; }
    .quick ui-icon.big { width: 28px; height: 28px; }
    .task { display: flex; align-items: center; gap: 5px; position: relative; width: 138px; padding-left: 10px; font-size: 14px; white-space: nowrap; }
    .task ui-icon { width: 29px; height: 29px; }
    .task::after { content: ""; position: absolute; left: 5px; right: 5px; bottom: 0; height: 3px; background: #b9dc93; }
    .task.on { background: #b47d20; }
    .task.on::after { left: 0; right: 0; background: #ff7a00; }
    .gap { width: 57px; }
    .tray { display: flex; align-items: center; margin-left: auto; padding-right: 4px; gap: 10px; }
    .weather { display: flex; align-items: center; gap: 11px; font-size: 17px; margin-right: 7px; }
    .weather ui-icon { width: 25px; height: 25px; }
    .tray .s { width: 20px; height: 20px; }
    .tray .caret { width: 17px; height: 17px; }
    .clock { width: 82px; height: 50px; text-align: center; font-size: 14px; line-height: 23px; padding-top: 2px; border-right: 1px solid #8fa173; }
  `;

  private tasks = [
    ["folder", "File Explorer", true],
    ["pdfFile", "1356 Youn...", false],
    ["word", "4136 OE + ...", false],
    ["excel", "Excel", false],
    ["gear", "Settings", false],
  ] as const;

  render() {
    return html`<nav class="bar">
      <button class="start" aria-label="Start"><ui-icon name="windows"></ui-icon></button>
      <div class="search"><ui-icon name="search"></ui-icon><input type="text" placeholder="Type here to search" aria-label="Search" /></div>
      <button class="quick" aria-label="Cortana"><ui-icon name="cortana"></ui-icon></button>
      <button class="quick" aria-label="Task view"><ui-icon name="taskView"></ui-icon></button>
      <button class="quick" aria-label="Chrome"><ui-icon class="big" name="chrome"></ui-icon></button>
      <button class="task"><ui-icon name="brave"></ui-icon>How to co...</button>
      <span class="gap"></span>
      ${this.tasks.map(([icon, text, on]) => html`<button class=${classMap({ task: true, on })}><ui-icon name=${icon}></ui-icon>${text}</button>`)}
      <div class="tray">
        <span class="weather"><ui-icon name="moon"></ui-icon>42°F</span>
        <ui-icon class="caret" name="chevUpThin"></ui-icon>
        <ui-icon class="s" name="speaker"></ui-icon><ui-icon class="s" name="cloudSync"></ui-icon>
        <ui-icon class="s" name="dropbox"></ui-icon><ui-icon class="s" name="wifi"></ui-icon>
        <time class="clock">7:16 AM<br />11/9/2021</time>
      </div>
    </nav>`;
  }
}

@customElement("app-root")
class AppRoot extends LitElement {
  static styles = css`
    :host { display: flex; flex-direction: column; height: 100vh; overflow: hidden; background: #fbfbfb; font: 15px/20px ${FONT}; color: #4a4a4a; }
    * { box-sizing: border-box; }
    button, input, select { font: inherit; color: inherit; margin: 0; padding: 0; border: 0; border-radius: 0; background: none; }
    .titlebar { display: flex; align-items: center; height: 29px; flex: none; background: #fff; color: #8e8e8e; padding: 0 3px; gap: 6px; font: 14px/20px ${UI_FONT}; }
    .titlebar .logo { width: 18px; height: 22px; }
    .winctl { display: flex; margin-left: auto; }
    .winctl button { width: 58px; height: 29px; display: grid; place-items: center; }
    .menu { display: flex; align-items: center; gap: 16px; height: 26px; flex: none; padding: 0 8px; font-size: 15px; border-bottom: 1px solid #c6c6c6; }
    .tabs { display: flex; height: 44px; flex: none; background: #eaeaea; border-bottom: 1px solid #c6c6c6; font-size: 18px; }
    .tabs .plain { padding-left: 18px; }
    .tabs .plain + .plain { padding: 0 34px; }
    .doctab { display: flex; align-items: center; gap: 8px; height: 44px; width: 225px; padding-left: 31px; background: #fbfbfb; border: solid #c6c6c6; border-width: 0 1px; font-size: 16px; color: #333; }
    .doctab ui-icon { width: 14px; height: 14px; color: #555; }
    .account { display: flex; align-items: center; gap: 20px; margin-left: auto; padding-right: 17px; }
    .toolbar { display: flex; align-items: center; height: 58px; flex: none; padding: 0 6px 0 3px; border-bottom: 1px solid #c6c6c6; font-size: 15px; }
    .set { display: flex; }
    .set button { width: 55px; height: 40px; display: grid; place-items: center; }
    .pages { margin-left: 87px; }
    .pageno { width: 36px; height: 34px; border-bottom: 1px solid #bdbdbd; text-align: center; margin-left: 13px; }
    .total { margin: 0 25px 0 8px; white-space: pre; }
    .sep { width: 1px; height: 35px; background: #c6c6c6; }
    .nav { margin-left: 14px; }
    .zoom { display: grid; align-items: center; width: 90px; height: 34px; margin: 0 11px; border-bottom: 1px solid #bdbdbd; }
    .zoom > * { grid-area: 1 / 1; }
    .zoom select { appearance: none; width: 100%; height: 33px; padding-left: 12px; }
    .zoom ui-icon { width: 11px; height: 11px; justify-self: end; margin-right: 8px; color: #555; pointer-events: none; }
    .set .mode { display: flex; align-items: center; justify-content: center; gap: 4px; width: 67px; color: #1f72c4; }
    .mode .dd { width: 11px; height: 11px; }
    .edit { margin-left: 14px; }
    .kb { margin: 0 14px 0 2px; }
    .share { margin-left: auto; }
    .toolhead { display: flex; align-items: center; justify-content: space-between; height: 58px; flex: none; padding: 0 18px 0 14px; border-left: 12px solid #bf39cf; border-bottom: 1px solid #c6c6c6; font-size: 17px; font-weight: 600; color: #444; }
    .toolhead h1 { margin: 0; font: inherit; font-size: 18px; }
    .done { width: 95px; height: 40px; border: 2px solid #505050; border-radius: 20px; }
    .main { position: relative; display: flex; flex: 1; min-height: 0; }
    .gutter { flex: none; display: flex; align-items: center; justify-content: center; width: 22px; background: #e9e9e9; color: #606060; }
    .gutter ui-icon { width: 15px; height: 15px; }
    .doc { flex: 1; min-width: 0; overflow: hidden; background: #fff; }
    .vscroll { flex: none; display: flex; flex-direction: column; align-items: center; width: 22px; background: #f0f0f0; border: solid #c9c9c9; border-width: 0 1px; color: #555; }
    .vscroll .splitter { width: 20px; height: 10px; border-bottom: 1px solid #a5a5a5; background: #e3e3e3; }
    .vscroll ui-icon { width: 12px; height: 12px; margin: 5px 0; }
    .vscroll .thumb { width: 20px; height: 79px; margin-top: 12px; background: #cdcdcd; }
    .vscroll .end { margin-top: auto; }
    .gutter.right { width: 23px; border-right: 1px solid #c9c9c9; }
    .tools { flex: none; width: 287px; padding: 18px 18px 0; font-size: 16px; }
    .tools button { display: flex; align-items: center; gap: 11px; height: 50px; width: 100%; text-align: left; }
    .tools ui-icon { width: 31px; height: 31px; }
    .tools .sel { color: #1f72c4; }
    .tools hr { margin: 12px 0; border: 0; border-top: 1px solid #c6c6c6; }
    .rail { flex: none; display: flex; flex-direction: column; width: 58px; border-left: 1px solid #c9c9c9; color: #606060; }
    .rail button { height: 57px; flex: none; display: grid; place-items: center; }
    .rail .on { background: #bf39cf; }
    .rail .arrow { height: 17px; }
    .rail .arrow ui-icon { width: 17px; height: 17px; margin-top: -14px; }
    preflight-dialog { position: absolute; left: 510px; top: 66px; }
  `;

  private btn = (icon: string, label: string) => html`<button aria-label=${label}><ui-icon name=${icon}></ui-icon></button>`;

  private toolList = [
    ["outputPreview", "Output Preview"], ["preflight", "Preflight"], ["editObject", "Edit Object"],
    ["convertColors", "Convert Colors"], ["flattener", "Flattener Preview"], ["saveX", "Save as PDF/X"], ["", ""],
    ["pageBoxes", "Set Page Boxes"], ["printerMarks", "Add Printer Marks"], ["hairlines", "Fix Hairlines"],
    ["ink", "Ink Manager"], ["trap", "Trap Presets"],
  ];

  private rail = ["Create", "Combine", "Organize", "Form", "Sign", "Export", "Compress", "Review", "Comment", "Scan", "Shield", "Redact", "Print", "More"];

  render() {
    return html`
      <header class="titlebar"><ui-icon class="logo" name="acrobat"></ui-icon><span>1356 Young Pet Agreement.pdf - Adobe Acrobat Pro DC (32-bit)</span>
        <div class="winctl">${this.btn("minimize", "Minimize")}${this.btn("restore", "Restore")}${this.btn("closeWin", "Close window")}</div></header>
      <nav class="menu">${["File", "Edit", "View", "E-Sign", "Window", "Help"].map((m) => html`<button>${m}</button>`)}</nav>
      <div class="tabs"><button class="plain">Home</button><button class="plain">Tools</button>
        <button class="doctab">1356 Young Pet Agr...<ui-icon name="x"></ui-icon></button>
        <div class="account"><ui-icon name="feedback"></ui-icon><ui-icon name="help"></ui-icon><ui-icon name="bell"></ui-icon><ui-icon name="avatar"></ui-icon></div></div>
      <div class="toolbar">
        <div class="set">${this.btn("save", "Save")}${this.btn("cloudUp", "Upload")}${this.btn("print", "Print")}${this.btn("zoomOut", "Find")}</div>
        <div class="set pages">${this.btn("scissors", "Cut")}${this.btn("up", "Previous page")}${this.btn("down", "Next page")}</div>
        <input class="pageno" type="text" aria-label="Page" .value=${"1"} /><span class="total">/  4</span><span class="sep"></span>
        <div class="set nav">${this.btn("pointer", "Select")}${this.btn("hand", "Hand")}${this.btn("minus", "Zoom out")}${this.btn("plus", "Zoom in")}</div>
        <div class="zoom"><select aria-label="Zoom"><option>130%</option></select><ui-icon name="caret"></ui-icon></div>
        <div class="set">${this.btn("fitWidth", "Fit width")}${this.btn("fitPage", "Fit page")}${this.btn("fullscreen", "Full screen")}
          <button class="mode" aria-label="Page display"><ui-icon name="fitWidth"></ui-icon><ui-icon class="dd" name="caret"></ui-icon></button></div>
        <div class="set kb">${this.btn("keyboard", "Hide toolbar")}</div>
        <span class="sep"></span>
        <div class="set edit">${this.btn("comment", "Comment")}${this.btn("marker", "Highlight")}${this.btn("sign", "Sign")}${this.btn("editDoc", "Edit")}${this.btn("trash", "Delete")}${this.btn("rotate", "Rotate")}</div>
        <div class="set share">${this.btn("link", "Share link")}${this.btn("mail", "Email")}${this.btn("addUser", "Add people")}</div>
      </div>
      <div class="toolhead"><h1>Print Production</h1><button class="done">Close</button></div>
      <main class="main">
        <div class="gutter"><ui-icon name="triRight"></ui-icon></div>
        <div class="doc"><pdf-page></pdf-page></div>
        <div class="vscroll"><div class="splitter"></div><ui-icon name="chevUp"></ui-icon><div class="thumb"></div><ui-icon class="end" name="chevDown"></ui-icon></div>
        <div class="gutter right"><ui-icon name="triRight"></ui-icon></div>
        <aside class="tools">${this.toolList.map(([icon, text]) => text
          ? html`<button class=${classMap({ sel: icon === "preflight" })}><ui-icon name=${icon}></ui-icon>${text}</button>`
          : html`<hr />`)}</aside>
        <aside class="rail">${this.rail.map((r) => html`<button class=${classMap({ on: r === "Print" })} aria-label=${r}><ui-icon name=${"rail" + r}></ui-icon></button>`)}
          <button class="arrow" aria-label="More"><ui-icon name="chevDown"></ui-icon></button></aside>
        <preflight-dialog></preflight-dialog>
      </main>
      <task-bar></task-bar>`;
  }
}
